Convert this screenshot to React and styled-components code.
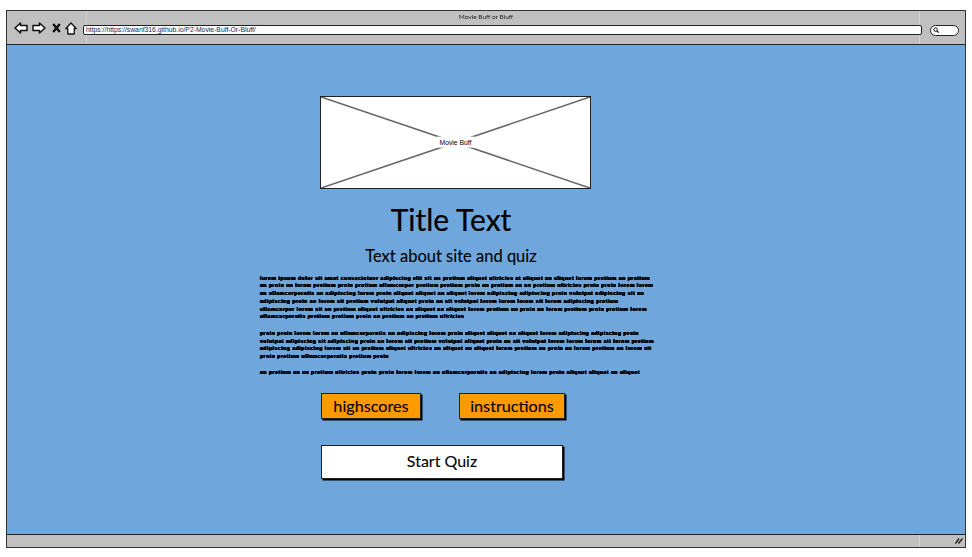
import React from "react";
import styled, { createGlobalStyle } from "styled-components";

const Global = createGlobalStyle`
  html, body { margin: 0; padding: 0; background: #fff; }
  body { font-family: Lato, "Noto Sans", sans-serif; color: #000; }
`;

const paragraphs = [
  [
    "lorem ipsum dolor sit amet consectetuer adipiscing elit sit an pretium aliquet ultricies at aliquet an aliquet lorem pretium an pretium",
    "an proin an lorem pretium proin pretium ullamcorper pretium pretium proin an pretium an an pretium ultricies proin proin lorem lorem",
    "an ullamcorperatis an adipiscing lorem proin aliquet aliquet an aliquet lorem adipiscing adipiscing proin volutpat adipiscing sit an",
    "adipiscing proin an lorem sit pretium volutpat aliquet proin an sit volutpat lorem lorem lorem sit lorem adipiscing pretium",
    "ullamcorper lorem sit an pretium aliquet ultricies an aliquet an aliquet lorem pretium an proin an lorem pretium proin pretium lorem",
    "ullamcorperatis pretium pretium proin an pretium an pretium ultricies",
  ],
  [
    "proin proin lorem lorem an ullamcorperatis an adipiscing lorem proin aliquet aliquet an aliquet lorem adipiscing adipiscing proin",
    "volutpat adipiscing sit adipiscing proin an lorem sit pretium volutpat aliquet proin an sit volutpat lorem lorem lorem sit lorem pretium",
    "adipiscing adipiscing lorem sit an pretium aliquet ultricies an aliquet an aliquet lorem pretium an proin an lorem pretium an lorem sit",
    "proin pretium ullamcorperatis pretium proin",
  ],
  [
    "an pretium an an pretium ultricies proin proin lorem lorem an ullamcorperatis an adipiscing lorem proin aliquet aliquet an aliquet",
  ],
];

const App = () => {
  return (
    <Page>
      <Global />
      <Window>
        <Toolbar>
          <WindowTitle>Movie Buff or Bluff</WindowTitle>
          <NavRow>
            <NavIcons>
              <svg width="14" height="12" viewBox="0 0 14 12">
                <path d="M1 6 L6.5 1 V3.5 H13 V8.5 H6.5 V11 Z" fill="#fff" stroke="#111" strokeWidth="1.5" strokeLinejoin="round" />
              </svg>
              <svg width="14" height="12" viewBox="0 0 14 12">
                <path d="M13 6 L7.5 1 V3.5 H1 V8.5 H7.5 V11 Z" fill="#fff" stroke="#111" strokeWidth="1.5" strokeLinejoin="round" />
              </svg>
              <svg width="9" height="10" viewBox="0 0 9 10">
                <path d="M1.2 1 L7.8 9 M7.8 1 L1.2 9" stroke="#111" strokeWidth="2.4" />
              </svg>
              <svg width="12" height="13" viewBox="0 0 12 13">
                <path d="M6 1 L11.2 6.5 H9.2 V12 H2.8 V6.5 H0.8 Z" fill="#fff" stroke="#111" strokeWidth="1.3" strokeLinejoin="round" />
              </svg>
            </NavIcons>
            <UrlBar>https://https://swanf316.github.io/P2-Movie-Buff-Or-Bluff/</UrlBar>
            <SearchPill>
              <svg width="6" height="6" viewBox="0 0 6 6">
                <circle cx="2.6" cy="2.6" r="1.8" fill="none" stroke="#111" strokeWidth="1" />
                <path d="M4 4 L5.6 5.6" stroke="#111" strokeWidth="1.1" />
              </svg>
            </SearchPill>
          </NavRow>
        </Toolbar>

        <Content>
          <Column>
            <ImageBox>
              <svg width="100%" height="100%" viewBox="0 0 269 91" preserveAspectRatio="none">
                <path d="M0 0 L269 91 M269 0 L0 91" stroke="#666" strokeWidth="1.6" />
              </svg>
              <ImageLabel>Movie Buff</ImageLabel>
            </ImageBox>
            <Title>Title Text</Title>
            <Subtitle>Text about site and quiz</Subtitle>
            {paragraphs.map((lines, i) => (
              <Paragraph key={i}>
                {lines.map((line, j) => (
                  <Line key={j}>{line}</Line>
                ))}
              </Paragraph>
            ))}
            <ButtonRow>
              <OrangeButton $width={100}>highscores</OrangeButton>
              <OrangeButton $width={106}>instructions</OrangeButton>
            </ButtonRow>
            <StartButton>Start Quiz</StartButton>
          </Column>
        </Content>

        <StatusBar>
          <svg width="8" height="6" viewBox="0 0 8 6">
            <path d="M0.5 5.5 L4 0.5 M3.5 5.5 L7.5 0.5" stroke="#222" strokeWidth="1.4" />
          </svg>
        </StatusBar>
      </Window>
    </Page>
  );
};

export default App;

const Page = styled.div`
  width: 972px;
  height: 557px;
  padding: 10px 6px 0 6px;
  box-sizing: border-box;
  overflow: hidden;
`;

const Window = styled.div`
  width: 960px;
  height: 538px;
  box-sizing: border-box;
  border: 1px solid #333;
  border-right-width: 1.5px;
  display: flex;
  flex-direction: column;
`;

const Toolbar = styled.div`
  height: 34px;
  flex: none;
  box-sizing: border-box;
  background-color: #c0c0c0;
  background-image: linear-gradient(#d2d2d2, #d2d2d2), linear-gradient(#d2d2d2, #d2d2d2);
  background-size: 1px 100%;
  background-position: 79px 0, 912px 0;
  background-repeat: no-repeat;
  border-bottom: 1px solid #222;
`;

const WindowTitle = styled.div`
  height: 12px;
  line-height: 11px;
  text-align: center;
  font-size: 6.5px;
  color: #222;
  filter: blur(0.2px);
`;

const NavRow = styled.div`
  display: flex;
  align-items: center;
  padding: 0 7px 0 7px;
  height: 14px;
`;

const NavIcons = styled.div`
  display: flex;
  align-items: center;
  width: 69px;
  flex: none;
  margin-bottom: 4px;
  svg:nth-child(2) { margin-left: 4px; }
  svg:nth-child(3) { margin-left: 6px; }
  svg:nth-child(4) { margin-left: 4px; }
`;

const UrlBar = styled.div`
  width: 839px;
  height: 10px;
  flex: none;
  box-sizing: border-box;
  background: #fff;
  border: 1px solid #222;
  border-radius: 2px;
  padding-left: 2px;
  font: 6.8px/8px "Liberation Sans", sans-serif;
  color: #0b2a5a;
  white-space: nowrap;
  overflow: hidden;
`;

const SearchPill = styled.div`
  width: 29px;
  height: 11px;
  flex: none;
  margin-left: 8px;
  box-sizing: border-box;
  background: #fff;
  border: 1px solid #222;
  border-radius: 6px;
  padding-left: 2px;
  display: flex;
  align-items: center;
`;

const Content = styled.main`
  flex: 1;
  background: #6fa6dc;
  padding: 51px 0 0 253px;
`;

const Column = styled.div`
  width: 400px;
  display: flex;
  flex-direction: column;
  align-items: flex-start;
`;

const ImageBox = styled.div`
  position: relative;
  width: 271px;
  height: 93px;
  margin-left: 60px;
  box-sizing: border-box;
  background: #fff;
  border: 1px solid #222;
  svg { display: block; }
`;

const ImageLabel = styled.span`
  position: absolute;
  left: 50%;
  top: 50%;
  transform: translate(-50%, -58%);
  background: #fff;
  padding: 1px 3px;
  font: 6.8px/9px "Liberation Sans", sans-serif;
  white-space: nowrap;
`;

const Title = styled.h1`
  width: 382px;
  margin: 12px 0 0 0;
  text-align: center;
  font-size: 30px;
  line-height: 36px;
  font-weight: 400;
  -webkit-text-stroke: 0.2px #000;
`;

const Subtitle = styled.h2`
  width: 382px;
  margin: 9px 0 0 0;
  text-align: center;
  font-size: 16.5px;
  line-height: 20px;
  font-weight: 400;
  -webkit-text-stroke: 0.1px #000;
`;

const Paragraph = styled.div`
  margin-top: 8.5px;
  &:first-of-type { margin-top: 9px; }
`;

const Line = styled.div`
  font: 700 5px/7.8px "Liberation Sans", sans-serif;
  letter-spacing: 0.57px;
  white-space: nowrap;
  text-shadow: 0.5px 0 0 #000, -0.5px 0 0 #000, 0 0.4px 0 #000;
  filter: blur(0.3px);
`;

const ButtonRow = styled.div`
  display: flex;
  gap: 38px;
  margin: 16px 0 0 61px;
`;

const OrangeButton = styled.div`
  width: ${(p) => p.$width}px;
  height: 26px;
  box-sizing: border-box;
  background: #ff9900;
  border: 1px solid #222;
  box-shadow: 1.5px 1.5px 0 #000;
  text-align: center;
  font-size: 16.2px;
  line-height: 24px;
  -webkit-text-stroke: 0.1px #000;
`;

const StartButton = styled.div`
  width: 242px;
  height: 34px;
  margin: 26px 0 0 61px;
  box-sizing: border-box;
  background: #fff;
  border: 1px solid #222;
  box-shadow: 1.5px 1.5px 0 #000;
  text-align: center;
  font-size: 16px;
  line-height: 30px;
  -webkit-text-stroke: 0.1px #000;
`;

const StatusBar = styled.div`
  height: 13px;
  flex: none;
  box-sizing: border-box;
  background-color: #c0c0c0;
  background-image: linear-gradient(#d2d2d2, #d2d2d2);
  background-size: 1px 100%;
  background-position: 912px 0;
  background-repeat: no-repeat;
  border-top: 1px solid #222;
  display: flex;
  align-items: center;
  justify-content: flex-end;
  padding-right: 2px;
`;
